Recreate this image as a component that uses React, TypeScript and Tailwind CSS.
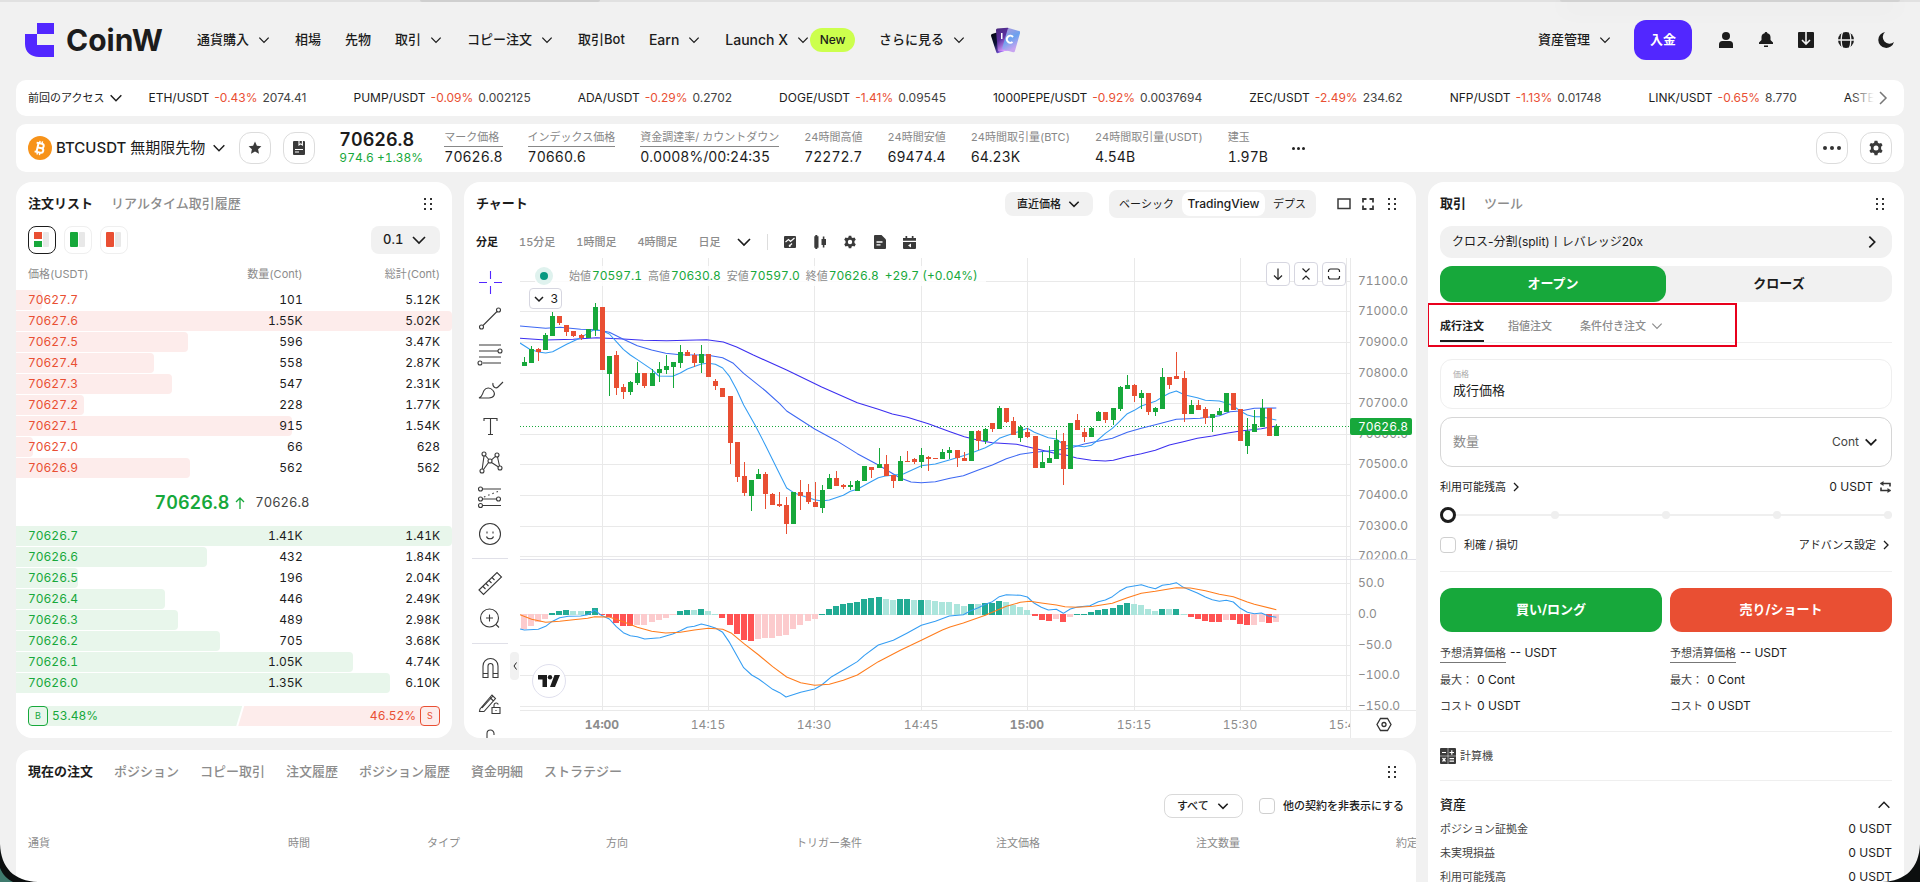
import React from 'react';

type Pt = [number, number];

/* ---------- small shared pieces ---------- */

const ROT = { down: '', up: 'rotate-180', right: '-rotate-90', left: 'rotate-90' } as const;

function Chev({ s = 14, dir = 'down', w = 1.1, cls = '' }: { s?: number; dir?: keyof typeof ROT; w?: number; cls?: string }) {
  return (
    <svg width={s} height={s} viewBox="0 0 12 12" fill="none" stroke="currentColor" strokeWidth={w} className={`shrink-0 ${ROT[dir]} ${cls}`}>
      <path d="M2 4l4 4 4-4" />
    </svg>
  );
}

function Grip() {
  return (
    <button aria-label="移動" className="flex h-6 w-6 items-center justify-center">
      <svg width="8" height="12" viewBox="0 0 8 12" fill="#333">
        {[0, 5, 10].map((y) => (
          <React.Fragment key={y}>
            <rect x="0" y={y} width="2" height="2" />
            <rect x="6" y={y} width="2" height="2" />
          </React.Fragment>
        ))}
      </svg>
    </button>
  );
}

function GearIcon({ s = 16 }: { s?: number }) {
  return (
    <svg width={s} height={s} viewBox="0 0 16 16" fill="#3a3a3a" fillRule="evenodd">
      <path d="M6.6 0.8h2.8l.5 2 1.3.75 2-.6 1.4 2.4-1.5 1.5v2.3l1.5 1.5-1.4 2.4-2-.6-1.3.75-.5 2H6.6l-.5-2-1.3-.75-2 .6-1.4-2.4 1.5-1.5v-2.3L1.400 5.350l1.400-2.400 2 .6 1.300-.75zM8 5.500a2.500 2.500 0 100 5 2.500 2.500 0 000-5z" />
    </svg>
  );
}

function SquareButton({ label, children }: { label: string; children: React.ReactNode }) {
  return (
    <button aria-label={label} className="flex h-8 w-8 items-center justify-center rounded-xl border border-[#dcdcdc]">
      {children}
    </button>
  );
}

/* ---------- header ---------- */

const NAV: { label: string; menu?: boolean; badge?: string; latin?: boolean }[] = [
  { label: '通貨購入', menu: true },
  { label: '相場' },
  { label: '先物' },
  { label: '取引', menu: true },
  { label: 'コピー注文', menu: true },
  { label: '取引Bot' },
  { label: 'Earn', menu: true, latin: true },
  { label: 'Launch X', menu: true, badge: 'New', latin: true },
  { label: 'さらに見る', menu: true },
];

function Header() {
  return (
    <header className="flex h-20 items-center pr-[22px] pl-6">
      <a href="#" aria-label="CoinW" className="flex w-[173px] shrink-0 items-center gap-3">
        <svg width="30" height="34" viewBox="0 0 30 34" fill="#5227ff">
          <path d="M13 0h17v11H13z" />
          <path d="M1 11h12v11h17v12H15C7 34 1 29 1 21z" />
        </svg>
        <span className="text-[30px] leading-8 font-bold">CoinW</span>
      </a>
      <nav className="flex items-center gap-6 text-[13px] font-medium whitespace-nowrap">
        {NAV.map((n) => (
          <a key={n.label} href="#" className={n.latin ? 'flex items-center text-sm' : 'flex items-center'}>
            {n.label}
            {n.menu && <Chev cls="ml-2" />}
            {n.badge && <span className="flex h-6 w-[45px] items-center justify-center rounded-full bg-[#ccff4d] text-xs">{n.badge}</span>}
          </a>
        ))}
        <a href="#" aria-label="カード">
          <svg width="30" height="28" viewBox="0 0 30 28">
            <defs>
              <linearGradient id="cardA" x1="0" y1="0" x2="0.4" y2="1">
                <stop offset="0" stopColor="#05060f" />
                <stop offset="0.5" stopColor="#0b1238" />
                <stop offset="1" stopColor="#8b5cf6" />
              </linearGradient>
              <linearGradient id="cardB" x1="0" y1="0" x2="0.4" y2="1">
                <stop offset="0" stopColor="#4a2a7c" />
                <stop offset="0.5" stopColor="#5b2fa0" />
                <stop offset="1" stopColor="#d79bff" />
              </linearGradient>
              <linearGradient id="cardC" x1="0" y1="0" x2="0.6" y2="1">
                <stop offset="0" stopColor="#a99be0" />
                <stop offset="0.5" stopColor="#6aa2ee" />
                <stop offset="1" stopColor="#c7a4f0" />
              </linearGradient>
            </defs>
            <rect x="7" y="5" width="13" height="20" rx="1.500" transform="rotate(-18 15 27)" fill="url(#cardA)" />
            <rect x="8" y="2" width="13" height="23" rx="1.500" transform="rotate(-5 15 27)" fill="url(#cardB)" />
            <path d="M11 7h1.500v6H11z" fill="#fff" />
            <rect x="11" y="2" width="13" height="22" rx="1.500" transform="rotate(16 15 27)" fill="url(#cardC)" />
            <path d="M23 11a3.500 3.500 0 10-.5 5" fill="none" stroke="#fff" strokeWidth="2" />
          </svg>
        </a>
      </nav>
      <div className="ml-auto flex items-center text-[13px] font-medium">
        <a href="#" className="flex items-center gap-2">
          資産管理
          <Chev />
        </a>
        <button className="ml-[22px] h-10 w-[58px] rounded-xl bg-[#5227ff] font-bold text-white">入金</button>
        <div className="ml-[22px] flex gap-4 text-[#1c1c1c]">
          <button aria-label="アカウント" className="flex size-6 items-center justify-center">
            <svg width="16" height="18" viewBox="0 0 16 18" fill="currentColor">
              <circle cx="8" cy="5" r="4" />
              <path d="M1 17v-3.500A3.500 3.500 0 014.500 10h7a3.500 3.500 0 013.500 3.500V17z" />
            </svg>
          </button>
          <button aria-label="通知" className="flex size-6 items-center justify-center">
            <svg width="16" height="18" viewBox="0 0 16 18" fill="currentColor">
              <path d="M8 1c-.8 0-1.300.5-1.400 1.200C4.700 2.700 3.500 4 3.500 6v3L1 11.500V13h14v-1.500L12.500 9V6c0-2-1.200-3.300-3.100-3.800C9.300 1.500 8.800 1 8 1zM6 14.500h4V16H6z" />
            </svg>
          </button>
          <button aria-label="ダウンロード" className="flex size-6 items-center justify-center">
            <svg width="16" height="16" viewBox="0 0 16 16">
              <path d="M0 1a1 1 0 011-1h14a1 1 0 011 1v14a1 1 0 01-1 1H1a1 1 0 01-1-1z" fill="currentColor" />
              <path d="M8 0v12M4 8l4 4 4-4" fill="none" stroke="#f1f1f1" strokeWidth="1.6" />
            </svg>
          </button>
          <button aria-label="言語" className="flex size-6 items-center justify-center">
            <svg width="18" height="18" viewBox="0 0 18 18" fill="none">
              <circle cx="9" cy="9" r="8" fill="currentColor" />
              <path d="M0 9h18M6 0c-2.500 5-2.500 13 0 18M12 0c2.500 5 2.500 13 0 18" stroke="#f1f1f1" strokeWidth="1.3" />
            </svg>
          </button>
          <button aria-label="テーマ" className="flex size-6 items-center justify-center">
            <svg width="16" height="16" viewBox="0 0 16 16" fill="currentColor">
              <path d="M7 0a8 8 0 109 10A6.500 6.500 0 017 0z" />
            </svg>
          </button>
        </div>
      </div>
    </header>
  );
}

const TICKERS = [
  ['ETH/USDT', '-0.43%', '2074.41'],
  ['PUMP/USDT', '-0.09%', '0.002125'],
  ['ADA/USDT', '-0.29%', '0.2702'],
  ['DOGE/USDT', '-1.41%', '0.09545'],
  ['1000PEPE/USDT', '-0.92%', '0.0037694'],
  ['ZEC/USDT', '-2.49%', '234.62'],
  ['NFP/USDT', '-1.13%', '0.01748'],
  ['LINK/USDT', '-0.65%', '8.770'],
  ['ASTER/USDT', '-0.81%', '0.6912'],
];

function TickerBar() {
  return (
    <div className="flex h-9 items-center rounded-[10px] bg-white px-3 text-xs normal-nums">
      <button className="flex shrink-0 items-center gap-1 text-[11px]">
        前回のアクセス
        <Chev s={16} />
      </button>
      <div className="relative ml-6 flex min-w-0 flex-1 gap-[47px] overflow-hidden whitespace-nowrap">
        {TICKERS.map(([name, pct, price]) => (
          <a key={name} href="#" className="flex gap-[5px]">
            <span>{name}</span>
            <span className="text-[#e94f33]">{pct}</span>
            <span className="text-[#444]">{price}</span>
          </a>
        ))}
        <span className="absolute top-0 right-0 h-full w-6 bg-linear-to-r from-transparent to-white" />
      </div>
      <button aria-label="次へ" className="text-[#777]">
        <Chev s={18} dir="right" w={1} />
      </button>
    </div>
  );
}

const STATS: { label: string; value: string; under?: boolean }[] = [
  { label: 'マーク価格', value: '70626.8', under: true },
  { label: 'インデックス価格', value: '70660.6', under: true },
  { label: '資金調達率/ カウントダウン', value: '0.0008%/00:24:35', under: true },
  { label: '24時間高値', value: '72272.7' },
  { label: '24時間安値', value: '69474.4' },
  { label: '24時間取引量(BTC)', value: '64.23K' },
  { label: '24時間取引量(USDT)', value: '4.54B' },
  { label: '建玉', value: '1.97B' },
];

function PairBar() {
  return (
    <div className="flex h-12 items-center rounded-[10px] bg-white px-3 whitespace-nowrap">
      <svg width="24" height="24" viewBox="0 0 24 24" className="shrink-0">
        <circle cx="12" cy="12" r="12" fill="#f7931a" />
        <g transform="rotate(13 12 12)" fill="none" stroke="#fff" strokeWidth="2">
          <path d="M7.500 7.500h5.500a2.200 2.200 0 010 4.400H9.500h4a2.300 2.300 0 010 4.600H7.500M9.500 7.500v9" />
          <path d="M10.500 5v2.500M13 5v2.500M10.500 16.500V19M13 16.500V19" strokeWidth="1.400" />
        </g>
      </svg>
      <button className="ml-1 flex items-center gap-1.5 text-[15px]">
        <span>
          <span className="font-medium">BTCUSDT</span> 無期限先物
        </span>
        <Chev s={16} />
      </button>
      <div className="ml-3 flex gap-3">
        <SquareButton label="お気に入り">
          <svg width="14" height="14" viewBox="0 0 14 14" fill="#3a3a3a">
            <path d="M7 .6l1.900 4.100 4.500.5-3.300 3 .9 4.500L7 10.500l-4 2.200.9-4.500-3.300-3 4.500-.5z" />
          </svg>
        </SquareButton>
        <SquareButton label="情報">
          <svg width="12" height="14" viewBox="0 0 12 14">
            <path d="M0 1a1 1 0 011-1h10a1 1 0 011 1v12a1 1 0 01-1 1H1a1 1 0 01-1-1z" fill="#3a3a3a" />
            <path d="M6 0v4l1.700-1.200L9.400 4V0M2 8.500h8M2 11h4" fill="none" stroke="#fff" strokeWidth="1.100" />
          </svg>
        </SquareButton>
      </div>
      <div className="ml-6 w-[105px]">
        <div className="text-lg leading-5 font-semibold">70626.8</div>
        <div className="text-xs leading-4 text-[#17a83b]">974.6 +1.38%</div>
      </div>
      <div className="flex gap-[25px]">
        {STATS.map((s) => (
          <div key={s.label}>
            <div className={s.under ? 'border-b border-[#888] text-[11px] leading-[17px] text-[#888]' : 'border-b border-transparent text-[11px] leading-[17px] text-[#888]'}>{s.label}</div>
            <div className="text-sm leading-5">{s.value}</div>
          </div>
        ))}
      </div>
      <button aria-label="もっと見る" className="ml-6 flex gap-0.5">
        <i className="size-[3px] rounded-full bg-[#222]" />
        <i className="size-[3px] rounded-full bg-[#222]" />
        <i className="size-[3px] rounded-full bg-[#222]" />
      </button>
      <div className="ml-auto flex gap-3">
        <SquareButton label="メニュー">
          <svg width="20" height="4" viewBox="0 0 20 4" fill="#333">
            <circle cx="3" cy="2" r="2" />
            <circle cx="10" cy="2" r="2" />
            <circle cx="17" cy="2" r="2" />
          </svg>
        </SquareButton>
        <SquareButton label="設定">
          <GearIcon />
        </SquareButton>
      </div>
    </div>
  );
}

/* ---------- order book ---------- */

type Level = [string, string, string, number];
const ASKS: Level[] = [
  ['70627.7', '101', '5.12K', 6],
  ['70627.6', '1.55K', '5.02K', 100],
  ['70627.5', '596', '3.47K', 39.5],
  ['70627.4', '558', '2.87K', 31.7],
  ['70627.3', '547', '2.31K', 35.8],
  ['70627.2', '228', '1.77K', 15.6],
  ['70627.1', '915', '1.54K', 63.3],
  ['70627.0', '66', '628', 4],
  ['70626.9', '562', '562', 39.8],
];
const BIDS: Level[] = [
  ['70626.7', '1.41K', '1.41K', 100],
  ['70626.6', '432', '1.84K', 43.8],
  ['70626.5', '196', '2.04K', 14.2],
  ['70626.4', '446', '2.49K', 34.2],
  ['70626.3', '489', '2.98K', 37.2],
  ['70626.2', '705', '3.68K', 46.8],
  ['70626.1', '1.05K', '4.74K', 77.3],
  ['70626.0', '1.35K', '6.10K', 85.8],
];

function Levels({ rows, ask }: { rows: Level[]; ask?: boolean }) {
  return (
    <tbody>
      {rows.map(([p, q, t, w]) => (
        <tr key={p} className="relative h-[21px] align-top">
          <td className={ask ? 'text-[#e94f33]' : 'text-[#17a83b]'}>
            <span className="absolute -inset-x-3 top-0 h-5">
              <span className={ask ? 'block h-5 rounded-r-sm bg-[#fdeceb]' : 'block h-5 rounded-r-sm bg-[#e8f6eb]'} style={{ width: `${w}%` }} />
            </span>
            <span className="relative">{p}</span>
          </td>
          <td className="text-right">
            <span className="relative">{q}</span>
          </td>
          <td className="text-right">
            <span className="relative">{t}</span>
          </td>
        </tr>
      ))}
    </tbody>
  );
}

function BookIcon({ kind }: { kind: 'both' | 'bid' | 'ask' }) {
  return (
    <svg width="16" height="16" viewBox="0 0 16 16">
      <rect x="9" y="0" width="6" height="15" rx="1" fill="#e8e8e8" />
      {kind === 'both' && <path d="M0 0h8v7H0z" fill="#e94f33" />}
      {kind === 'both' && <path d="M0 9h8v6H0z" fill="#17a83b" />}
      {kind === 'bid' && <rect width="8" height="15" rx="1" fill="#17a83b" />}
      {kind === 'ask' && <rect width="8" height="15" rx="1" fill="#e94f33" />}
    </svg>
  );
}

function OrderBook() {
  return (
    <section className="flex w-[436px] shrink-0 flex-col rounded-2xl bg-white px-3 pt-2.5 pb-3">
      <div className="flex h-6 items-center gap-[18px] text-[13px] font-medium">
        <button className="font-bold">注文リスト</button>
        <button className="text-[#8c8c8c]">リアルタイム取引履歴</button>
        <div className="ml-auto">
          <Grip />
        </div>
      </div>
      <div className="mt-2.5 flex h-7 items-center gap-2">
        <button aria-label="両方" className="flex size-7 items-center justify-center rounded-lg border border-[#1c1c1c]">
          <BookIcon kind="both" />
        </button>
        <button aria-label="買い" className="flex size-7 items-center justify-center rounded-lg border border-[#efefef]">
          <BookIcon kind="bid" />
        </button>
        <button aria-label="売り" className="flex size-7 items-center justify-center rounded-lg border border-[#efefef]">
          <BookIcon kind="ask" />
        </button>
        <label className="ml-auto flex h-7 w-[69px] items-center justify-between rounded-lg bg-[#f1f1f1] px-3">
          <select aria-label="価格単位" className="appearance-none bg-transparent text-[13px] font-medium">
            <option>0.1</option>
          </select>
          <Chev s={18} />
        </label>
      </div>
      <table className="mt-2.5 w-full table-fixed text-xs leading-5">
        <thead className="text-[11px] text-[#8c8c8c]">
          <tr className="h-[26px] align-top">
            <th className="text-left font-normal">価格(USDT)</th>
            <th className="text-right font-normal">数量(Cont)</th>
            <th className="text-right font-normal">総計(Cont)</th>
          </tr>
        </thead>
        <Levels rows={ASKS} ask />
      </table>
      <div className="flex h-[47px] items-center justify-center gap-1.5 pr-1">
        <span className="text-lg font-semibold text-[#17a83b]">70626.8</span>
        <svg width="10" height="12" viewBox="0 0 10 12" fill="none" stroke="#17a83b" strokeWidth="1.300">
          <path d="M5 12V1M1 5l4-4 4 4" />
        </svg>
        <span className="ml-1 text-[13px] text-[#444]">70626.8</span>
      </div>
      <table className="w-full table-fixed text-xs leading-5">
        <Levels rows={BIDS} />
      </table>
      <div className="mt-3 flex h-5 text-xs leading-5">
        <div className="flex w-[52%] items-center gap-1 rounded-l-md bg-[#e8f6eb] text-[#17a83b] [clip-path:polygon(0_0,100%_0,calc(100%_-_6px)_100%,0_100%)]">
          <span className="flex size-5 items-center justify-center rounded-sm border border-[#17a83b] text-[9px]">B</span>
          53.48%
        </div>
        <div className="-ml-1 flex flex-1 items-center justify-end gap-1 rounded-r-md bg-[#fdeceb] text-[#e94f33] [clip-path:polygon(6px_0,100%_0,100%_100%,0_100%)]">
          46.52%
          <span className="flex size-5 items-center justify-center rounded-sm border border-[#e94f33] text-[9px]">S</span>
        </div>
      </div>
    </section>
  );
}

/* ---------- chart data: three units per pixel ---------- */

const UP = '#17a83b';
const DOWN = '#e94f33';

// direction, high, body top, body bottom, low
const CANDLES: [0 | 1, number, number, number, number][] = [
  [1, 546, 561, 573, 573], [1, 513, 522, 564, 564], [0, 519, 521, 531, 558], [1, 474, 480, 525, 525], [1, 411, 423, 483, 483],
  [0, 423, 423, 444, 450], [0, 450, 450, 471, 483], [0, 468, 468, 482, 486], [0, 477, 480, 489, 495], [1, 462, 462, 489, 489],
  [1, 384, 396, 465, 483], [0, 396, 396, 585, 585], [1, 543, 543, 597, 663], [0, 528, 540, 639, 660], [0, 627, 636, 651, 672],
  [1, 618, 621, 651, 660], [1, 561, 594, 624, 630], [0, 594, 594, 633, 639], [1, 582, 594, 633, 633], [1, 561, 582, 594, 621],
  [1, 540, 573, 585, 597], [1, 561, 561, 576, 639], [1, 510, 531, 564, 579], [0, 525, 530, 543, 543], [0, 534, 540, 564, 576],
  [1, 510, 537, 564, 594], [0, 537, 537, 606, 606], [0, 612, 618, 633, 645], [0, 639, 639, 666, 666], [0, 663, 663, 804, 867],
  [0, 801, 801, 906, 921], [0, 861, 903, 954, 963], [1, 915, 915, 963, 1008], [1, 882, 897, 912, 912], [0, 890, 897, 957, 1002],
  [0, 954, 957, 990, 990], [0, 951, 986, 992, 996], [0, 966, 990, 1047, 1077], [1, 951, 951, 1047, 1047], [0, 915, 951, 962, 1005],
  [0, 927, 951, 981, 987], [0, 921, 981, 996, 996], [1, 930, 945, 999, 1014], [1, 897, 909, 942, 942], [0, 888, 909, 933, 933],
  [0, 926, 930, 936, 942], [1, 918, 930, 936, 945], [1, 915, 918, 948, 948], [1, 873, 873, 918, 918], [0, 876, 876, 885, 909],
  [1, 819, 867, 879, 879], [0, 840, 867, 903, 903], [0, 900, 900, 918, 939], [1, 843, 858, 918, 918], [0, 828, 857, 861, 861],
  [0, 849, 852, 860, 866], [1, 819, 840, 861, 879], [0, 843, 846, 852, 888], [0, 849, 849, 852, 852], [1, 822, 831, 852, 852],
  [1, 816, 825, 834, 852], [0, 825, 825, 849, 876], [0, 831, 849, 857, 857], [1, 768, 768, 857, 857], [0, 765, 768, 798, 825],
  [1, 759, 762, 798, 807], [0, 744, 744, 762, 771], [1, 693, 699, 762, 762], [0, 699, 699, 741, 745], [0, 726, 738, 780, 780],
  [1, 750, 756, 789, 801], [0, 759, 771, 786, 789], [0, 783, 783, 879, 879], [1, 831, 861, 879, 879], [1, 813, 849, 864, 864],
  [1, 765, 795, 852, 852], [0, 774, 798, 882, 930], [1, 744, 744, 882, 882], [0, 717, 735, 765, 765], [0, 759, 771, 786, 801],
  [1, 756, 759, 786, 786], [1, 708, 711, 738, 738], [0, 711, 711, 735, 744], [1, 699, 699, 735, 750], [1, 633, 636, 702, 708],
  [1, 600, 630, 642, 642], [0, 627, 630, 663, 681], [1, 645, 654, 669, 702], [0, 654, 654, 711, 720], [1, 696, 699, 711, 723],
  [1, 579, 606, 702, 702], [0, 606, 606, 630, 642], [0, 531, 603, 612, 612], [0, 588, 609, 717, 741], [1, 675, 690, 717, 717],
  [0, 675, 690, 705, 705], [0, 696, 702, 729, 747], [1, 717, 717, 729, 771], [1, 699, 708, 720, 720], [1, 654, 654, 711, 711],
  [0, 654, 654, 705, 705], [0, 702, 702, 798, 798], [1, 729, 768, 813, 837], [1, 705, 747, 771, 771], [1, 672, 699, 756, 756],
  [0, 699, 699, 783, 783], [1, 747, 753, 783, 783],
];

const HIST = [
  -45, -35, -24, -14, 5, 12, 15, 12, 12, 12, 21, -4, -9, -26, -35, -35, -32, -32, -24, -18, -11, -3, 12, 15, 15, 18, 12, 3, -11, -32,
  -60, -78, -81, -75, -72, -72, -66, -63, -45, -32, -20, -14, 3, 18, 27, 33, 36, 39, 48, 51, 54, 48, 45, 48, 48, 45, 45, 45, 42, 39,
  39, 33, 27, 33, 33, 36, 36, 42, 39, 30, 24, 14, -5, -17, -20, -14, -24, -8, 3, 3, 9, 15, 18, 21, 30, 36, 33, 30, 18, 12, 18, 18, 18,
  3, -8, -14, -20, -24, -24, -17, -17, -30, -33, -33, -24, -27, -24,
];
// s = strong shade (momentum growing), w = weak shade; ten bars per group
const SHADE = [
  'wwwwssswws', 'sssssswwww', 'wwsswswwss', 'ssswwwwwww', 'wwssssssss', 'swwsswswww',
  'wwwswsssww', 'wwssswswss', 'sssssswwww', 'swswsssssw', 'ssswwsw',
].join('');

const move = (pts: Pt[], dx: number, dy: number): Pt[] => pts.map(([x, y]) => [x + dx, y + dy]);

const MA_FAST: Pt[] = [
  [180, 504], [208, 522], [235, 531], [257, 534], [278, 530], [320, 508], [362, 488], [400, 465], [427, 467], [448, 477], [469, 500],
  [490, 523], [511, 540], [532, 554], [575, 583], [596, 603], [638, 604], [661, 594], [682, 582], [724, 567], [745, 565], [766, 568],
  [788, 579], [809, 605], [830, 644], [851, 690], [885, 750], [917, 812], [953, 885], [980, 939], [1001, 953], [1022, 961], [1064, 974],
  [1085, 978], [1108, 975], [1150, 961], [1171, 949], [1192, 943], [1230, 922], [1255, 908], [1276, 903], [1297, 901], [1330, 897],
  [1384, 872], [1426, 867], [1468, 855],
  ...move([
    [40, 842], [62, 835], [106, 818], [127, 807], [148, 790], [169, 782], [211, 768], [232, 760], [253, 772], [295, 788], [319, 792],
    [345, 812], [375, 812], [403, 815], [424, 811], [440, 798], [466, 775], [487, 760], [508, 740], [532, 716], [553, 706], [574, 693],
    [616, 679], [637, 666], [658, 655], [679, 648], [705, 660], [742, 668], [766, 676], [808, 678], [829, 684], [850, 693], [871, 708],
    [892, 720], [913, 725], [934, 725], [955, 730], [979, 735],
  ], 1470, 0),
];
const MA_MID: Pt[] = [
  [180, 453], [257, 460], [300, 457], [362, 463], [410, 464], [448, 472], [490, 493], [532, 512], [575, 525], [617, 535], [661, 539],
  [740, 540], [788, 548], [820, 565], [851, 595], [917, 648], [959, 686], [980, 708], [1064, 762], [1129, 797], [1192, 836],
  [1255, 870], [1300, 897], [1321, 909], [1353, 921], [1384, 923], [1426, 920], [1470, 910],
  ...move([
    [40, 902], [85, 885], [127, 870], [169, 851], [211, 838], [253, 832], [319, 826], [361, 819], [403, 807], [487, 790], [532, 772],
    [574, 760], [616, 749], [679, 733], [750, 730], [808, 722], [840, 710], [871, 708], [913, 700], [979, 699],
  ], 1470, 0),
];
const MA_SLOW: Pt[] = [
  [180, 490], [257, 495], [340, 493], [410, 488], [490, 492], [550, 496], [620, 497], [680, 496], [740, 494], [790, 501], [830, 516],
  [880, 540], [980, 585], [1085, 636], [1192, 683], [1255, 703], [1297, 717], [1342, 727], [1405, 746],
  ...move([
    [0, 770], [43, 785], [85, 796], [127, 803], [200, 808], [232, 815], [274, 825], [320, 836], [345, 839], [380, 849], [424, 856],
    [466, 858], [490, 856], [530, 845], [574, 836], [616, 826], [658, 810], [700, 800], [742, 790], [787, 783], [829, 775], [871, 768],
    [934, 761], [979, 753],
  ], 1470, 0),
];
const MACD: Pt[] = move([
  [180, 477], [193, 480], [235, 478], [257, 469], [275, 455], [299, 443], [325, 439], [362, 438], [383, 434], [404, 420], [424, 436],
  [448, 447], [469, 470], [490, 488], [511, 497], [532, 500], [554, 507], [600, 503], [638, 492], [661, 482], [682, 472], [703, 469],
  [724, 462], [745, 467], [766, 474], [788, 487], [809, 518], [830, 556], [851, 593], [875, 615], [896, 627], [938, 658], [959, 668],
  [978, 681], [1022, 667], [1064, 657], [1085, 645], [1115, 620], [1150, 600], [1192, 575], [1213, 556], [1255, 525], [1300, 511],
  [1342, 489], [1384, 466], [1426, 454], [1468, 438],
  ...move([
    [40, 434], [62, 422], [85, 413], [106, 403], [127, 395], [148, 380], [169, 374], [211, 376], [232, 381], [253, 400], [274, 412],
    [295, 420], [319, 418], [340, 430], [361, 417], [382, 411], [420, 407], [445, 395], [466, 390], [487, 380], [508, 364], [530, 352],
    [574, 344], [595, 351], [616, 356], [637, 346], [660, 343], [679, 338], [700, 352], [742, 369], [766, 381], [787, 389], [808, 394],
    [829, 391], [850, 396], [871, 415], [892, 427], [913, 431], [934, 429], [955, 438], [979, 442],
  ], 1470, 0),
], 0, 885);
const SIGNAL: Pt[] = move([
  [180, 434], [215, 448], [257, 457], [299, 454], [340, 449], [383, 445], [404, 440], [448, 441], [490, 455], [532, 472], [575, 484],
  [617, 489], [661, 487], [703, 480], [745, 475], [788, 478], [815, 490], [851, 520], [896, 555], [938, 590], [980, 621], [1022, 638],
  [1064, 646], [1108, 643], [1150, 631], [1192, 615], [1255, 575], [1321, 541], [1384, 511], [1447, 480],
  ...move([
    [0, 471], [40, 459], [106, 436], [169, 409], [211, 397], [240, 394], [274, 399], [319, 405], [345, 410], [382, 412], [430, 409],
    [487, 400], [532, 383], [574, 370], [616, 364], [679, 353], [721, 354], [766, 362], [808, 373], [850, 380], [892, 396], [913, 403],
    [979, 419],
  ], 1470, 0),
], 0, 885);

const snap = (v: number) => Math.round(v / 3) * 3;
const left = (i: number) => 180 + snap(193 + 21.28 * i - 7.5 - 180);

const PRICE_GRID: [number, string][] = [
  [23, '71100.0'], [53, '71000.0'], [84, '70900.0'], [115, '70800.0'], [145, '70700.0'],
  [176, '70600.0'], [206, '70500.0'], [237, '70400.0'], [268, '70300.0'], [298, '70200.0'],
];
const MACD_GRID: [number, string][] = [[325, '50.0'], [356, '0.0'], [387, '−50.0'], [417, '−100.0'], [448, '−150.0']];
const TIME_GRID: [number, string][] = [
  [82, '14:00'], [188, '14:15'], [294, '14:30'], [401, '14:45'], [507, '15:00'], [614, '15:15'], [720, '15:30'], [826, '15:45'],
];

function Line({ pts, color }: { pts: Pt[]; color: string }) {
  return <polyline points={pts.map((p) => p.join(',')).join(' ')} fill="none" stroke={color} strokeWidth="3.200" strokeLinejoin="round" />;
}

function ChartCanvas() {
  return (
    <svg viewBox="0 0 896 480" className="block w-full" fontSize="12" fill="#8c8c8c" role="img" aria-label="BTCUSDT 分足">
      <defs>
        <clipPath id="plot"><rect width="830" height="480" /></clipPath>
        <clipPath id="top"><rect width="896" height="301" /></clipPath>
        <clipPath id="low"><rect width="896" height="452" /></clipPath>
      </defs>
      <g fill="#e9e9e9" shapeRendering="crispEdges">
        {TIME_GRID.map(([x]) => <rect key={x} x={x} y="0" width="1" height="452" />)}
        {PRICE_GRID.concat(MACD_GRID).map(([y]) => <rect key={y} x="0" y={y} width="830" height="1" />)}
        <rect x="830" y="0" width="1" height="480" />
        <rect x="0" y="452" width="896" height="1" />
        <rect x="0" y="301" width="896" height="1" fill="#e0e0e8" />
      </g>
      <path d="M0 168.500H830" stroke={UP} strokeDasharray="1 2" />
      <g transform={`scale(${1 / 3}) translate(-180 -249)`}>
        <g shapeRendering="crispEdges">
          {HIST.map((v, i) => {
            const s = SHADE[i] === 's';
            const h = Math.max(3, snap(Math.abs(v)));
            const x = Math.max(180, left(i) - 3);
            return <rect key={i} x={x} y={v > 0 ? 1320 - h : 1317} width="18" height={h} fill={v > 0 ? (s ? '#22ab94' : '#ace5dc') : s ? '#ff5252' : '#fccbcd'} />;
          })}
        </g>
        <Line pts={MACD} color="#349df3" />
        <Line pts={SIGNAL} color="#ff7c1c" />
        <Line pts={MA_SLOW} color="#3c2ff0" />
        <Line pts={MA_MID} color="#3d68f3" />
        <Line pts={MA_FAST} color="#349df3" />
        <g shapeRendering="crispEdges">
          {CANDLES.map(([up, h, t, b, l], i) => (
            <g key={i} fill={up ? UP : DOWN}>
              <rect x={left(i) + 6} y={snap(h)} width="3" height={Math.max(3, snap(l) - snap(h))} />
              <rect x={left(i)} y={snap(t)} width="15" height={Math.max(3, snap(b) - snap(t))} />
            </g>
          ))}
        </g>
      </g>
      <g clipPath="url(#top)">{PRICE_GRID.map(([y, t]) => <text key={t} x="838" y={y + 4}>{t}</text>)}</g>
      <g clipPath="url(#low)">{MACD_GRID.map(([y, t]) => <text key={t} x="838" y={y + 4}>{t}</text>)}</g>
      <g clipPath="url(#plot)" textAnchor="middle">
        {TIME_GRID.map(([x, t]) => <text key={t} x={x} y="471" fontWeight={t.endsWith(':00') ? 700 : 400}>{t}</text>)}
      </g>
      <rect x="830" y="160" width="62" height="17" rx="2" fill={UP} />
      <text x="838" y="173" fill="#fff">70626.8</text>
      <g fill="none" stroke="#333" strokeWidth="1.300">
        <path d="M860.500 460.500h7l3.500 6-3.500 6h-7l-3.500-6z" />
        <circle cx="864" cy="466.500" r="2" />
      </g>
    </svg>
  );
}

/* ---------- drawing tools ---------- */

const TOOLS: { name: string; body: React.ReactNode; color?: string; sep?: boolean }[] = [
  { name: 'カーソル', color: '#5227ff', body: <path d="M14.500 3v8M14.500 18v8M3 14.500h8M18 14.500h8" /> },
  { name: 'トレンドライン', body: <><circle cx="5.500" cy="23" r="2" /><circle cx="22.500" cy="6" r="2" /><path d="M7 21.500L21 7.500" /></> },
  { name: 'フィボナッチ', body: <><path d="M3 5h22M3 11h19M3 17h22M7 23h18" /><circle cx="24" cy="11" r="2" /><circle cx="4" cy="23" r="2" /></> },
  { name: 'ブラシ', body: <path d="M3 22h10c5 0 7-4 4-7.500s-7-3-9 0C6 18 7 20 3 22zM17 7c-1 4 3 6 5 4l5-5" /> },
  { name: 'テキスト', body: <path d="M8 9V6.500h13V9M14.500 6.500v16M12 22.500h5" /> },
  { name: 'パターン', body: <><circle cx="6" cy="23" r="2" /><circle cx="8" cy="6" r="2" /><circle cx="14" cy="13" r="2" /><circle cx="21" cy="7" r="2" /><circle cx="24" cy="20" r="2" /><path d="M6.200 21L8 8M7.500 21.500l5-7M9.300 7.500l3.500 4M15.500 11.800l4-3.500M15.500 14.500l7 4.500M21.500 9l2 9" /></> },
  { name: '予測', body: <><circle cx="4.500" cy="5" r="2" /><circle cx="4.500" cy="15" r="2" /><circle cx="22.500" cy="15" r="2" /><circle cx="4.500" cy="21.500" r="2" /><path d="M6.500 5H25M6.500 15h14M6.500 21.500H25" /><path d="M8 13l15-6" strokeDasharray="1.500 3" /></> },
  { name: '絵文字', sep: true, body: <><circle cx="14" cy="14" r="10.500" /><path d="M10.500 16.500c1 3 6 3 7 0M11 11.500v2M17 11.500v2" /></> },
  { name: '測定', body: <path d="M3 21L21 3.500l4.500 4.500L7.500 25.500zM7 17.500l2.500 2.500M10 14.500l2.500 2.500M13 11.500l2.500 2.500M16 8.500l2.500 2.500" /> },
  { name: 'ズーム', sep: true, body: <><circle cx="13.500" cy="13" r="9" /><path d="M20 19.500l3 3M13.500 9.500v7M10 13h7" /></> },
  { name: 'マグネット', body: <path d="M7 23.500V12a7.500 7.500 0 0115 0v11.500h-5V12a2.500 2.500 0 00-5 0v11.500zM7 19.500h5M17 19.500h5" /> },
  { name: '描画ロック', body: <><path d="M4 19L16 5l3.500 3.500L8 21.500H3.500zM6 18l11-12M14 7.500l3.500 3.500" /><path d="M16 17.500h8v6h-8zM18 17v-2a2.200 2.200 0 014.300-.5M20 20v1" /></> },
  { name: 'ロック', body: <path d="M11 14V7.500a3.500 3.500 0 017 0V9M8 14h13v9H8z" /> },
];

function DrawingTools() {
  return (
    <div className="flex w-14 shrink-0 flex-col items-center overflow-hidden pt-1.5 pr-1">
      {TOOLS.map((t) => (
        <React.Fragment key={t.name}>
          <button aria-label={t.name} className="flex h-9 w-9 shrink-0 items-center justify-center">
            <svg width="28" height="28" viewBox="0 0 28 28" fill="none" stroke={t.color ?? '#3a3a3a'} strokeWidth="1.100">
              {t.body}
            </svg>
          </button>
          {t.sep && <hr className="my-1.5 w-9 shrink-0 border-[#e0e0e8]" />}
        </React.Fragment>
      ))}
    </div>
  );
}

/* ---------- chart panel ---------- */

const OHLC = [
  ['始値', '70597.1'],
  ['高値', '70630.8'],
  ['安値', '70597.0'],
  ['終値', '70626.8'],
];

function FloatButton({ label, children }: { label: string; children: React.ReactNode }) {
  return (
    <button aria-label={label} className="flex size-6 items-center justify-center rounded border border-[#d6d6e0] bg-white">
      <svg width="14" height="14" viewBox="0 0 14 14" fill="none" stroke="#222" strokeWidth="1.200">
        {children}
      </svg>
    </button>
  );
}

function ChartPanel() {
  return (
    <section className="flex h-[556px] min-w-0 flex-1 flex-col overflow-hidden rounded-2xl bg-white">
      <div className="mt-2 flex h-7 shrink-0 items-center px-3 text-[11px]">
        <h2 className="text-[13px] font-bold">チャート</h2>
        <label className="ml-auto flex h-6 w-[88px] items-center justify-between rounded-lg bg-[#f1f1f1] px-3 font-medium">
          <select aria-label="価格種別" className="appearance-none bg-transparent">
            <option>直近価格</option>
          </select>
          <Chev s={14} w={1.3} />
        </label>
        <div className="ml-4 flex h-7 items-center rounded-lg bg-[#f1f1f1] px-0.5">
          <button className="w-[71px]">ベーシック</button>
          <button className="h-6 w-[83px] rounded-lg bg-white text-xs font-medium">TradingView</button>
          <button className="w-[49px]">デプス</button>
        </div>
        <div className="ml-4 flex items-center">
          <button aria-label="分割" className="flex size-6 items-center justify-center">
            <svg width="14" height="12" viewBox="0 0 14 12" fill="none" stroke="#3a3a3a" strokeWidth="1.500"><path d="M1 1h12v9.500H1z" /></svg>
          </button>
          <button aria-label="全画面" className="flex size-6 items-center justify-center">
            <svg width="12" height="12" viewBox="0 0 12 12" fill="none" stroke="#3a3a3a" strokeWidth="1.800"><path d="M1 4.500V1h3.500M7.500 1H11v3.500M11 7.500V11H7.500M4.500 11H1V7.500" /></svg>
          </button>
          <Grip />
        </div>
      </div>
      <div className="flex h-12 shrink-0 items-center pl-3 text-[11px] font-medium text-[#8c8c8c]">
        <div className="flex gap-[21px]">
          <button className="font-bold text-[#1c1c1c]">分足</button>
          <button>15分足</button>
          <button>1時間足</button>
          <button>4時間足</button>
          <button>日足</button>
        </div>
        <button aria-label="時間足を選択" className="ml-3.5 text-[#1c1c1c]"><Chev s={18} /></button>
        <span className="mr-2.5 ml-3.5 h-4 w-px bg-[#ddd]" />
        <div className="flex gap-1.5">
          <button aria-label="インジケーター" className="flex size-6 items-center justify-center">
            <svg width="12" height="12" viewBox="0 0 12 12"><rect width="12" height="12" rx="1" fill="#3a3a3a" /><path d="M1.500 6l3-2.500 2 2 4-3.500M5 9l1.500 1.500M8 7.500L5 10.500" fill="none" stroke="#fff" strokeWidth="1.200" /></svg>
          </button>
          <button aria-label="チャート種別" className="flex size-6 items-center justify-center">
            <svg width="12" height="14" viewBox="0 0 12 14" fill="#3a3a3a"><path d="M1.300 0h2v1.200H4.500v11.600H3.300V14h-2v-1.200H.3V1.200h1zM7.500 4h1.300V1.500h1.600V4H12v6h-1.600v2.500H8.800V10H7.500z" /></svg>
          </button>
          <button aria-label="チャート設定" className="flex size-6 items-center justify-center"><GearIcon s={14} /></button>
          <button aria-label="メモ" className="flex size-6 items-center justify-center">
            <svg width="12" height="14" viewBox="0 0 12 14"><path d="M1 0h6.500L12 4.500V13a1 1 0 01-1 1H1a1 1 0 01-1-1V1a1 1 0 011-1z" fill="#3a3a3a" /><path d="M2.500 7h6M2.500 9.800h4" stroke="#fff" strokeWidth="1.300" /></svg>
          </button>
          <button aria-label="日付へ移動" className="flex size-6 items-center justify-center">
            <svg width="13" height="13" viewBox="0 0 13 13" fill="#3a3a3a"><path d="M0 2h2.500V0h1.700v2h4.600V0h1.700v2H13v2.800H0zM0 6h13v6a1 1 0 01-1 1H1a1 1 0 01-1-1z" /><path d="M8 7.500v4L5 9.500z" fill="#fff" /></svg>
          </button>
        </div>
      </div>
      <div className="relative -mt-2 flex min-h-0 flex-1">
        <DrawingTools />
        <button aria-label="ツールを隠す" className="absolute bottom-[58px] left-[46px] flex h-7 w-[9px] items-center justify-center rounded bg-[#f1f1f1]">
          <svg width="4" height="8" viewBox="0 0 4 8" fill="none" stroke="#222"><path d="M3.500 0.500L1 4l2.500 3.500" /></svg>
        </button>
        <div className="relative min-w-0 flex-1">
          <ChartCanvas />
          <div className="absolute top-2 left-[15px] flex h-5 items-center bg-white/80 pr-2 text-xs">
            <span className="flex size-[18px] items-center justify-center rounded-full bg-[#dff2ee]"><span className="size-2 rounded-full bg-[#089981]" /></span>
            <dl className="ml-4 flex gap-1.5">
              {OHLC.map(([k, v]) => (
                <div key={k} className="flex items-center gap-px">
                  <dt className="text-[11px] text-[#8c8c8c]">{k}</dt>
                  <dd className="text-[#17a83b]">{v}</dd>
                </div>
              ))}
            </dl>
            <span className="ml-1.5 text-[#17a83b]">+29.7 (+0.04%)</span>
          </div>
          <button className="absolute top-[30px] left-[9px] flex h-[21px] w-[33px] items-center justify-center gap-1.5 rounded-sm border border-[#d6d6e0] bg-white text-xs">
            <Chev s={12} w={1.5} />3
          </button>
          <div className="absolute top-1 right-[70px] flex gap-1">
            <FloatButton label="下へ"><path d="M7 1.500v11M3 8.500l4 4 4-4" /></FloatButton>
            <FloatButton label="折りたたむ"><path d="M3.500 1.500L7 5l3.500-3.500M3.500 12.500L7 9l3.500 3.500" /></FloatButton>
            <FloatButton label="最大化"><path d="M1.500 5V4a2 2 0 012-2h7a2 2 0 012 2v1M1.500 9v1a2 2 0 002 2h7a2 2 0 002-2V9" /></FloatButton>
          </div>
          <a href="#" aria-label="TradingView" className="absolute bottom-10 left-3 flex size-[34px] items-center justify-center rounded-full border border-[#e0e0ee] bg-white">
            <svg width="22" height="12" viewBox="0 0 22 12" fill="#1c1c1c"><path d="M0 0h9v12H4.500V4.500H0z" /><circle cx="12" cy="2.200" r="2.200" /><path d="M16.500 0H22l-5 12h-5z" /></svg>
          </a>
        </div>
      </div>
    </section>
  );
}

/* ---------- bottom panel ---------- */

const TABS = ['現在の注文', 'ポジション', 'コピー取引', '注文履歴', 'ポジション履歴', '資金明細', 'ストラテジー'];

function OrdersPanel() {
  return (
    <section className="min-h-[160px] flex-1 overflow-hidden rounded-t-2xl bg-white pt-2.5">
      <div className="flex h-6 items-center gap-[21px] pr-2 pl-3 text-[13px] font-medium text-[#8c8c8c]">
        {TABS.map((t, i) => (
          <button key={t} className={i === 0 ? 'font-bold text-[#1c1c1c]' : ''}>{t}</button>
        ))}
        <div className="ml-auto pr-1"><Grip /></div>
      </div>
      <div className="mt-2.5 flex h-6 items-center justify-end gap-4 pr-3 text-[11px] font-medium">
        <label className="flex h-6 w-[79px] items-center justify-between rounded-lg border border-[#d9d9d9] px-3">
          <select aria-label="フィルター" className="appearance-none bg-transparent">
            <option>すべて</option>
          </select>
          <Chev s={14} w={1.3} />
        </label>
        <label className="flex items-center gap-2">
          <input type="checkbox" className="size-4 appearance-none rounded border border-[#cfcfcf] bg-white" />
          他の契約を非表示にする
        </label>
      </div>
      <table className="ml-3 w-[1568px] table-fixed text-left text-[11px] text-[#8c8c8c]">
        <thead>
          <tr className="h-[50px]">
            <th className="w-[260px] font-normal">通貨</th>
            <th className="w-[139px] font-normal">時間</th>
            <th className="w-[179px] font-normal">タイプ</th>
            <th className="w-[190px] font-normal">方向</th>
            <th className="w-[200px] font-normal">トリガー条件</th>
            <th className="w-[200px] font-normal">注文価格</th>
            <th className="w-[200px] font-normal">注文数量</th>
            <th className="w-[200px] font-normal">約定数量</th>
          </tr>
        </thead>
      </table>
    </section>
  );
}

/* ---------- trade panel ---------- */

function Side({ label, buy }: { label: string; buy?: boolean }) {
  return (
    <div className="flex-1">
      <button className={buy ? 'h-11 w-full rounded-xl bg-[#17a83b] text-[13px] font-bold text-white' : 'h-11 w-full rounded-xl bg-[#e94f33] text-[13px] font-bold text-white'}>{label}</button>
      <div className="mt-3 flex gap-1 text-xs leading-[18px] normal-nums">
        <span className="border-b border-[#777] text-[11px] text-[#444]">予想清算価格</span>-- USDT
      </div>
      <div className="mt-2 flex gap-1 text-xs leading-[18px]">
        <span className="text-[11px] text-[#444]">最大：</span>0 Cont
      </div>
      <div className="mt-2 flex gap-1 text-xs leading-[18px]">
        <span className="text-[11px] text-[#444]">コスト</span>0 USDT
      </div>
    </div>
  );
}

function TradePanel() {
  return (
    <section className="w-[476px] shrink-0 overflow-hidden rounded-t-2xl bg-white px-3 pt-2.5">
      <div className="flex h-6 items-center gap-[18px] text-[13px] font-medium">
        <button className="font-bold">取引</button>
        <button className="text-[#8c8c8c]">ツール</button>
        <div className="ml-auto"><Grip /></div>
      </div>
      <button className="mt-2.5 flex h-8 w-full items-center justify-between rounded-xl bg-[#f1f1f1] px-3 text-xs normal-nums">
        <span>クロス-分割(split)丨レバレッジ20x</span>
        <Chev s={16} dir="right" w={1.300} />
      </button>
      <div className="mt-2 flex h-9 rounded-xl bg-[#f1f1f1] text-[13px] font-bold">
        <button className="flex-1 rounded-xl bg-[#17a83b] text-white">オープン</button>
        <button className="flex-1">クローズ</button>
      </div>
      <div className="relative mt-1.5 flex h-[35px] items-end gap-6 border-b border-[#efefef] text-[11px] font-medium text-[#8c8c8c]">
        <button className="h-[34px] border-b-2 border-[#1c1c1c] pt-1 font-bold text-[#1c1c1c]">成行注文</button>
        <button className="h-[34px] border-b-2 border-transparent pt-1">指値注文</button>
        <button className="ml-1 flex h-[34px] items-center gap-1 border-b-2 border-transparent pt-1">
          条件付き注文
          <Chev s={14} w={1} />
        </button>
        <span className="pointer-events-none absolute -top-[5px] -left-[13px] h-11 w-[310px] border-2 border-[#e8001c]" />
      </div>
      <label className="mt-4 flex h-[50px] flex-col justify-center rounded-xl border border-[#efefef] px-3">
        <span className="text-[8px] leading-3 text-[#aaa]">価格</span>
        <input readOnly value="成行価格" className="w-full bg-transparent text-[13px] leading-5 outline-none" />
      </label>
      <div className="mt-2 flex h-[50px] items-center rounded-xl border border-[#d6d6d6] px-3 text-xs">
        <input aria-label="数量" placeholder="数量" className="min-w-0 flex-1 bg-transparent text-[13px] outline-none placeholder:text-[#8c8c8c]" />
        <label className="flex items-center gap-1">
          <select aria-label="単位" className="appearance-none bg-transparent text-[#444]">
            <option>Cont</option>
          </select>
          <Chev s={16} w={1.300} />
        </label>
      </div>
      <div className="mt-2.5 flex h-5 items-center text-[11px]">
        <a href="#" className="flex items-center gap-1">
          利用可能残高
          <Chev s={12} dir="right" w={1.300} />
        </a>
        <span className="ml-auto text-xs">0 USDT</span>
        <button aria-label="振替" className="ml-1.5">
          <svg width="13" height="12" viewBox="0 0 13 12" fill="none" stroke="#333" strokeWidth="1.600">
            <path d="M1.500 2.500h9.500v3M11.500 9.500H2v-3" />
            <path d="M4.500 0L1 2.500 4.500 5zM8.500 7L12 9.500 8.500 12z" fill="#333" stroke="none" />
          </svg>
        </button>
      </div>
      <div className="relative mt-2.5 flex h-4 items-center">
        <div className="absolute inset-x-0 flex h-0.5 items-center justify-between bg-[#efefef]">
          {[0, 1, 2, 3, 4].map((i) => <span key={i} className="size-2 rounded-full bg-[#efefef]" />)}
        </div>
        <input
          type="range"
          aria-label="数量の割合"
          defaultValue={0}
          className="relative w-full appearance-none bg-transparent [&::-webkit-slider-thumb]:size-4 [&::-webkit-slider-thumb]:appearance-none [&::-webkit-slider-thumb]:rounded-full [&::-webkit-slider-thumb]:border-3 [&::-webkit-slider-thumb]:border-solid [&::-webkit-slider-thumb]:border-[#1c1c1c] [&::-webkit-slider-thumb]:bg-white"
        />
      </div>
      <div className="mt-3 flex h-5 items-center text-[11px]">
        <label className="flex items-center gap-2">
          <input type="checkbox" className="size-4 appearance-none rounded border border-[#cfcfcf] bg-white" />
          利確 / 損切
        </label>
        <a href="#" className="ml-auto flex items-center gap-1">
          アドバンス設定
          <Chev s={12} dir="right" w={1.300} />
        </a>
      </div>
      <hr className="mt-4 border-[#efefef]" />
      <div className="mt-4 flex gap-2">
        <Side label="買い/ロング" buy />
        <Side label="売り/ショート" />
      </div>
      <hr className="mt-4 border-[#efefef]" />
      <button className="flex h-12 items-center gap-1 text-[11px] text-[#444]">
        <svg width="16" height="16" viewBox="0 0 16 16">
          <rect width="16" height="16" rx="1" fill="#3a3a3a" />
          <path d="M8 0v16M0 8h16" stroke="#fff" strokeWidth=".5" />
          <path d="M2 4.500h4M9.500 4.500h4.500M11.800 2.300v4.400M2.500 10l3 3.500M5.500 10l-3 3.500M9.500 10.700h4.500M9.500 13.200h4.500" stroke="#fff" strokeWidth="1.200" />
        </svg>
        計算機
      </button>
      <hr className="border-[#efefef]" />
      <div className="mt-3 flex h-6 items-center justify-between text-[13px] font-medium">
        資産
        <button aria-label="折りたたむ"><Chev s={16} dir="up" /></button>
      </div>
      <dl className="text-[11px] leading-6">
        {['ポジション証拠金', '未実現損益', '利用可能残高'].map((k) => (
          <div key={k} className="flex justify-between">
            <dt className="text-[#444]">{k}</dt>
            <dd className="text-xs leading-6">0 USDT</dd>
          </div>
        ))}
      </dl>
    </section>
  );
}

export default function App() {
  return (
    <div className="relative flex h-screen flex-col overflow-hidden bg-[#f1f1f1] font-[Inter,'Noto_Sans_CJK_JP',sans-serif] text-[#1c1c1c] tabular-nums">
      <div className="absolute inset-x-0 top-0 h-0.5 bg-[#e1e1e1]" />
      <div className="absolute top-0 left-[420px] h-0.5 w-[180px] rounded-b bg-[#cfcfcf]" />
      <div className="absolute top-0 right-5 h-0.5 w-[340px] rounded-b bg-[#d2d2d2] shadow-[0_4px_24px_rgba(0,0,0,0.16)]" />
      <Header />
      <div className="flex flex-col gap-2 px-4">
        <TickerBar />
        <PairBar />
      </div>
      <main className="mt-2.5 flex min-h-0 flex-1 gap-3 px-4">
        <div className="flex min-w-0 flex-1 flex-col gap-3">
          <div className="flex shrink-0 gap-3">
            <OrderBook />
            <ChartPanel />
          </div>
          <OrdersPanel />
        </div>
        <TradePanel />
      </main>
      <svg width="38" height="38" viewBox="0 0 38 38" className="absolute bottom-0 left-0">
        <path d="M0 0C1 24 14 37 38 38H0z" fill="#0c0f0f" />
        <path d="M0 24C3 31 7 35 13 38H0z" fill="#3f7a6d" />
      </svg>
      <svg width="38" height="38" viewBox="0 0 38 38" className="absolute right-0 bottom-0">
        <path d="M38 0C37 24 24 37 0 38h38z" fill="#0c0f0f" />
      </svg>
    </div>
  );
}
